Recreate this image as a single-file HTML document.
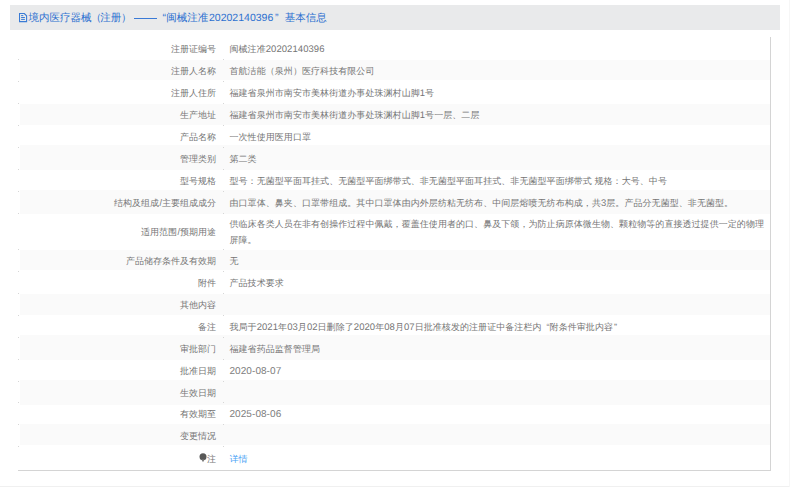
<!DOCTYPE html>
<html><head><meta charset="utf-8">
<style>
html,body{margin:0;padding:0;background:#fff;}
body{width:790px;height:487px;position:relative;overflow:hidden;font-family:"Liberation Sans",sans-serif;}
.hdr{position:absolute;left:10px;top:5px;width:770px;height:25px;background:#e9eaeb;}
.hdr .s{position:absolute;top:7px;font-size:10.5px;line-height:13px;color:#2c70d0;white-space:nowrap;text-rendering:geometricPrecision;}
.bg{position:absolute;left:20px;width:750px;background:#fafafa;}
.lab{position:absolute;right:574px;font-size:9px;line-height:11px;color:#757575;white-space:nowrap;text-align:right;}
.val{position:absolute;left:229.5px;letter-spacing:0.06px;text-rendering:geometricPrecision;font-size:9px;line-height:11px;color:#757575;white-space:nowrap;}
.ql{margin-left:5px;}
.qr{margin-left:1px;}
.dot{position:absolute;width:1px;height:1px;background:#d6d6d6;}
.rb{position:absolute;left:770px;top:37px;width:1px;height:434px;background:#d4d4d4;}
.bb{position:absolute;left:18px;top:470px;width:753px;height:1px;background:#d4d4d4;}
.edge-b{position:absolute;left:0;top:486px;width:790px;height:1px;background:#f0f0f0;}
.edge-r{position:absolute;left:789px;top:0;width:1px;height:487px;background:#f6f6f6;}
</style></head><body>
<div class="hdr">
<svg style="position:absolute;left:9px;top:8px" width="9" height="10" viewBox="0 0 9 10"><path d="M0.5 0.5H5.3L7.6 2.8V8.6H0.5Z" fill="none" stroke="#3a7bd5" stroke-width="1.1"/><path d="M2.1 2.6H4.3M2.1 4.5H5.9M2.1 6.4H5.9" stroke="#3a7bd5" stroke-width="1"/></svg>
<span class="s" style="left:18.5px">境内医疗器械</span>
<span class="s" style="left:81px">（</span>
<span class="s" style="left:90.3px">注册</span>
<span class="s" style="left:111px">）</span>
<div style="position:absolute;left:124px;top:13px;width:23px;height:1px;background:#3a7ad6"></div>
<span class="s" style="left:152.5px">“</span>
<span class="s" style="left:156.2px">闽械注准</span>
<span class="s" style="left:199px">20202140396</span>
<span class="s" style="left:265px">”</span>
<span class="s" style="left:274.8px">基本信息</span>
</div>
<div class="bg" style="top:60px;height:20px"></div><div class="bg" style="top:104px;height:21px"></div><div class="bg" style="top:145px;height:25px"></div><div class="bg" style="top:190px;height:24px"></div><div class="bg" style="top:250px;height:20px"></div><div class="bg" style="top:294px;height:21px"></div><div class="bg" style="top:335px;height:25px"></div><div class="bg" style="top:380px;height:25px"></div><div class="bg" style="top:424px;height:21px"></div><div class="lab" style="top:44px">注册证编号</div><div class="val" style="top:44px">闽械注准<span style="font-size:9.5px;line-height:9px">20202140396</span></div><div class="lab" style="top:66px">注册人名称</div><div class="val" style="top:66px">首航洁能（泉州）医疗科技有限公司</div><div class="lab" style="top:88px">注册人住所</div><div class="val" style="top:88px">福建省泉州市南安市美林街道办事处珠渊村山脚<span style="font-size:9.5px;line-height:9px">1</span>号</div><div class="lab" style="top:110px">生产地址</div><div class="val" style="top:110px">福建省泉州市南安市美林街道办事处珠渊村山脚<span style="font-size:9.5px;line-height:9px">1</span>号一层、二层</div><div class="lab" style="top:132px">产品名称</div><div class="val" style="top:132px">一次性使用医用口罩</div><div class="lab" style="top:154px">管理类别</div><div class="val" style="top:154px">第二类</div><div class="lab" style="top:176px">型号规格</div><div class="val" style="top:176px">型号：无菌型平面耳挂式、无菌型平面绑带式、非无菌型平面耳挂式、非无菌型平面绑带式 规格：大号、中号</div><div class="lab" style="top:198px">结构及组成/主要组成成分</div><div class="val" style="top:198px">由口罩体、鼻夹、口罩带组成。其中口罩体由内外层纺粘无纺布、中间层熔喷无纺布构成，共<span style="font-size:9.5px;line-height:9px">3</span>层。产品分无菌型、非无菌型。</div><div class="lab" style="top:227px">适用范围/预期用途</div><div class="val" style="top:216px ;line-height:16px">供临床各类人员在非有创操作过程中佩戴，覆盖住使用者的口、鼻及下颌，为防止病原体微生物、颗粒物等的直接透过提供一定的物理<br>屏障。</div><div class="lab" style="top:256px">产品储存条件及有效期</div><div class="val" style="top:256px">无</div><div class="lab" style="top:278px">附件</div><div class="val" style="top:278px">产品技术要求</div><div class="lab" style="top:300px">其他内容</div><div class="lab" style="top:322px">备注</div><div class="val" style="top:322px">我局于<span style="font-size:9.5px;line-height:9px">2021</span>年<span style="font-size:9.5px;line-height:9px">03</span>月<span style="font-size:9.5px;line-height:9px">02</span>日删除了<span style="font-size:9.5px;line-height:9px">2020</span>年<span style="font-size:9.5px;line-height:9px">08</span>月<span style="font-size:9.5px;line-height:9px">07</span>日批准核发的注册证中备注栏内<span class="ql">“</span>附条件审批内容<span class="qr">”</span></div><div class="lab" style="top:344px">审批部门</div><div class="val" style="top:344px">福建省药品监督管理局</div><div class="lab" style="top:366px">批准日期</div><div class="val" style="top:366px"><span style="font-size:10px;line-height:9px;color:#7c7c7c">2020-08-07</span></div><div class="lab" style="top:388px">生效日期</div><div class="lab" style="top:409px">有效期至</div><div class="val" style="top:409px"><span style="font-size:10px;line-height:9px;color:#7c7c7c">2025-08-06</span></div><div class="lab" style="top:431px">变更情况</div><svg style="position:absolute;left:198.5px;top:453px" width="8" height="10" viewBox="0 0 8 10"><circle cx="4" cy="3.8" r="3.5" fill="#585858"/><path d="M2.3 6.2L4 9.2L5.7 6.2Z" fill="#777"/></svg><div class="lab" style="top:454px">注</div><div class="val" style="top:454px"><span style="color:#4a9ff5">详情</span></div>
<div class="dot" style="left:18px;top:59px"></div><div class="dot" style="left:223px;top:59px"></div><div class="dot" style="left:18px;top:81px"></div><div class="dot" style="left:223px;top:81px"></div><div class="dot" style="left:18px;top:103px"></div><div class="dot" style="left:223px;top:103px"></div><div class="dot" style="left:18px;top:125px"></div><div class="dot" style="left:223px;top:125px"></div><div class="dot" style="left:18px;top:147px"></div><div class="dot" style="left:223px;top:147px"></div><div class="dot" style="left:18px;top:169px"></div><div class="dot" style="left:223px;top:169px"></div><div class="dot" style="left:18px;top:191px"></div><div class="dot" style="left:223px;top:191px"></div><div class="dot" style="left:18px;top:213px"></div><div class="dot" style="left:223px;top:213px"></div><div class="dot" style="left:18px;top:249px"></div><div class="dot" style="left:223px;top:249px"></div><div class="dot" style="left:18px;top:271px"></div><div class="dot" style="left:223px;top:271px"></div><div class="dot" style="left:18px;top:293px"></div><div class="dot" style="left:223px;top:293px"></div><div class="dot" style="left:18px;top:315px"></div><div class="dot" style="left:223px;top:315px"></div><div class="dot" style="left:18px;top:337px"></div><div class="dot" style="left:223px;top:337px"></div><div class="dot" style="left:18px;top:359px"></div><div class="dot" style="left:223px;top:359px"></div><div class="dot" style="left:18px;top:381px"></div><div class="dot" style="left:223px;top:381px"></div><div class="dot" style="left:18px;top:402px"></div><div class="dot" style="left:223px;top:402px"></div><div class="dot" style="left:18px;top:424px"></div><div class="dot" style="left:223px;top:424px"></div><div class="dot" style="left:18px;top:446px"></div><div class="dot" style="left:223px;top:446px"></div>
<div class="rb"></div><div class="bb"></div>
<div class="edge-b"></div><div class="edge-r"></div>
</body></html>
